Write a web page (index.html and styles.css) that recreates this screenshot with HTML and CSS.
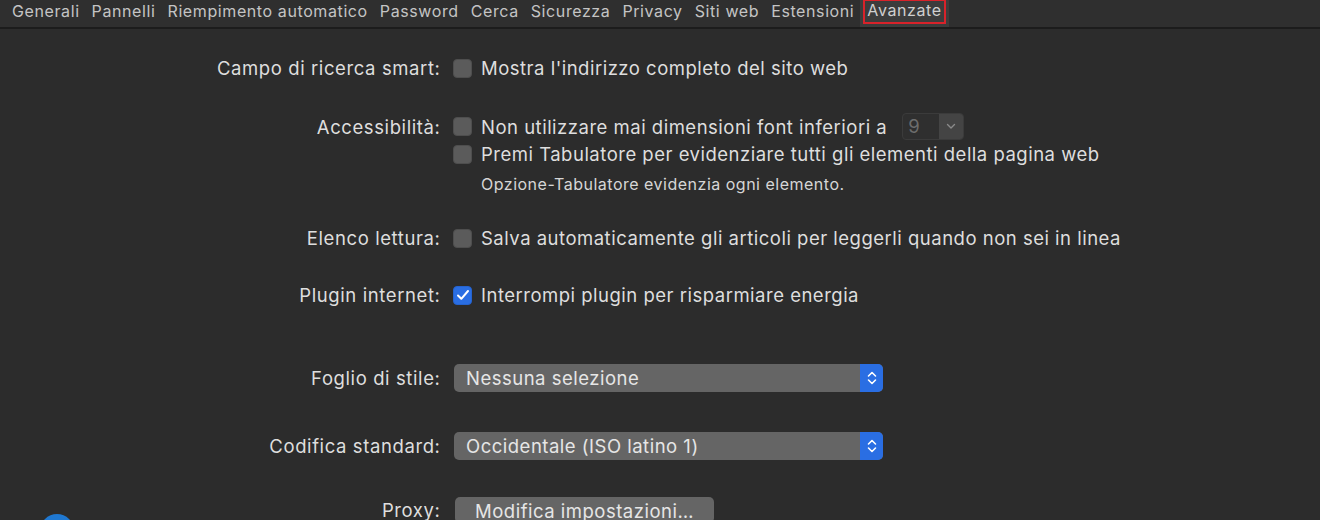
FILE: index.html
```html
<!DOCTYPE html>
<html lang="it">
<head>
<meta charset="utf-8">
<title>Avanzate</title>
<link rel="stylesheet" href="styles.css">
</head>
<body>
<nav class="toolbar">
  <span class="tab">Generali</span>
  <span class="tab">Pannelli</span>
  <span class="tab">Riempimento automatico</span>
  <span class="tab">Password</span>
  <span class="tab">Cerca</span>
  <span class="tab">Sicurezza</span>
  <span class="tab">Privacy</span>
  <span class="tab">Siti web</span>
  <span class="tab">Estensioni</span>
  <span class="tab tab-active"><span class="tab-mark">Avanzate</span></span>
</nav>
<main class="form">
  <div class="row r1">
    <span class="label">Campo di ricerca smart:</span>
    <span class="ctrl"><span class="check"></span>Mostra l'indirizzo completo del sito web</span>
  </div>
  <div class="row r2">
    <span class="label">Accessibilità:</span>
    <span class="ctrl"><span class="check"></span>Non utilizzare mai dimensioni font inferiori a
      <span class="mini-select"><span class="mini-val">9</span><span class="mini-arrow"><svg width="10" height="7" viewBox="0 0 10 7"><path d="M1.5 1.5 L5 5 L8.5 1.5" fill="none" stroke="#8a8a8a" stroke-width="1.4" stroke-linecap="round" stroke-linejoin="round"/></svg></span></span>
    </span>
  </div>
  <div class="row r3">
    <span class="label"></span>
    <span class="ctrl"><span class="check"></span>Premi Tabulatore per evidenziare tutti gli elementi della pagina web</span>
  </div>
  <div class="row note">
    <span class="label"></span>
    <span class="ctrl small">Opzione-Tabulatore evidenzia ogni elemento.</span>
  </div>
  <div class="row r4">
    <span class="label">Elenco lettura:</span>
    <span class="ctrl"><span class="check"></span>Salva automaticamente gli articoli per leggerli quando non sei in linea</span>
  </div>
  <div class="row r5">
    <span class="label">Plugin internet:</span>
    <span class="ctrl"><span class="check checked"><svg width="14" height="12" viewBox="0 0 14 12"><path d="M2 6.5 L5.3 9.8 L12 2" fill="none" stroke="#fff" stroke-width="2" stroke-linecap="round" stroke-linejoin="round"/></svg></span>Interrompi plugin per risparmiare energia</span>
  </div>
  <div class="row sel1">
    <span class="label">Foglio di stile:</span>
    <span class="select"><span class="select-val">Nessuna selezione</span><span class="select-arrow"><svg width="12" height="18" viewBox="0 0 12 18"><path d="M2.5 7 L6 3.5 L9.5 7 M2.5 11 L6 14.5 L9.5 11" fill="none" stroke="#fff" stroke-width="1.6" stroke-linecap="round" stroke-linejoin="round"/></svg></span></span>
  </div>
  <div class="row sel2">
    <span class="label">Codifica standard:</span>
    <span class="select"><span class="select-val">Occidentale (ISO latino 1)</span><span class="select-arrow"><svg width="12" height="18" viewBox="0 0 12 18"><path d="M2.5 7 L6 3.5 L9.5 7 M2.5 11 L6 14.5 L9.5 11" fill="none" stroke="#fff" stroke-width="1.6" stroke-linecap="round" stroke-linejoin="round"/></svg></span></span>
  </div>
  <div class="row proxy">
    <span class="label">Proxy:</span>
    <span class="ctrl"><span class="button">Modifica impostazioni…</span></span>
  </div>
</main>
<span class="help-dot"></span>
</body>
</html>
```
FILE: styles.css
```css
html, body {
  margin: 0;
  padding: 0;
}
body {
  width: 1320px;
  height: 520px;
  overflow: hidden;
  background: #2c2c2c;
  color: #dedede;
  font-family: Inter, "Liberation Sans", Arial, sans-serif;
  position: relative;
}
.toolbar {
  display: flex;
  align-items: stretch;
  height: 27px;
  background: #2f2f2f;
  border-bottom: 2px solid #1c1c1c;
  padding-left: 6px;
  font-size: 16px;
  letter-spacing: 0.6px;
  color: #c4c4c4;
}
.tab {
  display: flex;
  align-items: center;
  padding: 0 6px 3px;
  height: 22px;
}
.tab-active {
  background: #3c3c3c;
  padding: 0 3px;
  height: 27px;
  align-items: flex-start;
}
.tab-mark {
  border: 2px solid #d8222a;
  border-top-width: 1px;
  padding: 0 2px;
  height: 21px;
  line-height: 19px;
  color: #d0d0d0;
}
.form {
  padding-top: 28px;
  font-size: 18.5px;
  letter-spacing: 0.5px;
}
.row {
  display: grid;
  grid-template-columns: 440px 1fr;
  column-gap: 13px;
  align-items: center;
  height: 22px;
}
.label {
  text-align: right;
  white-space: nowrap;
  letter-spacing: 0.6px;
  margin-right: -0.5px;
}
.ctrl {
  display: flex;
  align-items: center;
  white-space: nowrap;
}
.check {
  width: 19px;
  height: 19px;
  box-sizing: border-box;
  border-radius: 4px;
  background: #5b5b5b;
  border: 1px solid #4e4e4e;
  margin-right: 9px;
  flex: none;
  display: flex;
  align-items: center;
  justify-content: center;
}
.checked {
  background: #2a6ee3;
  border-color: #2563cf;
}
.r2 { margin-top: 34px; }
.r3 { margin-top: 8px; }
.note { margin-top: 9px; height: 20px; }
.small {
  font-size: 16px;
  letter-spacing: 0.5px;
  padding-left: 28px;
  color: #d6d6d6;
}
.r4 { margin-top: 33px; }
.r5 { margin-top: 35px; }
.mini-select {
  display: inline-flex;
  margin-left: 15px;
  height: 27px;
  width: 62px;
  box-sizing: border-box;
  border: 1px solid #3b3b3b;
  border-radius: 4px;
  overflow: hidden;
  background: #2f2f2f;
}
.mini-val {
  flex: 1;
  color: #6c6c6c;
  padding-left: 5px;
  line-height: 25px;
}
.mini-arrow {
  width: 24px;
  background: #444;
  display: flex;
  align-items: center;
  justify-content: center;
}
.sel1 { margin-top: 58px; height: 28px; }
.sel2 { margin-top: 40px; height: 28px; }
.select {
  display: flex;
  width: 429px;
  height: 28px;
  border-radius: 5px;
  overflow: hidden;
  background: #656565;
  margin-left: 1px;
}
.select-val {
  flex: 1;
  padding-left: 12px;
  line-height: 28px;
  color: #e6e6e6;
}
.select-arrow {
  width: 23px;
  background: #2a6ee3;
  display: flex;
  align-items: center;
  justify-content: center;
}
.proxy { margin-top: 37px; height: 26px; }
.button {
  margin-left: 2px;
  height: 26px;
  width: 259px;
  box-sizing: border-box;
  border-radius: 5px;
  background: #656565;
  color: #e6e6e6;
  text-align: center;
  line-height: 28px;
}
.help-dot {
  position: absolute;
  left: 40px;
  top: 514px;
  width: 34px;
  height: 34px;
  border-radius: 50%;
  background: #1f78d1;
}
```
